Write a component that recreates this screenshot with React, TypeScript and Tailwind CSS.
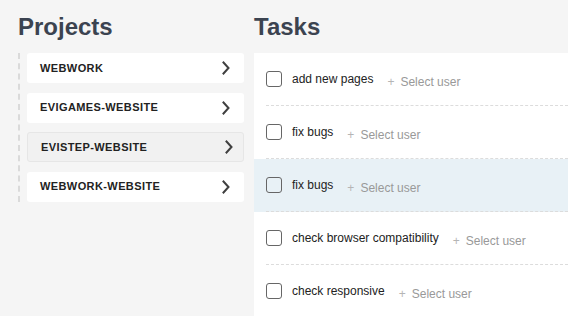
import clsx from "clsx";

const projects = [
  { name: "WEBWORK", active: false },
  { name: "EVIGAMES-WEBSITE", active: false },
  { name: "EVISTEP-WEBSITE", active: true },
  { name: "WEBWORK-WEBSITE", active: false },
];

const tasks = [
  { title: "add new pages", active: false },
  { title: "fix bugs", active: false },
  { title: "fix bugs", active: true },
  { title: "check browser compatibility", active: false },
  { title: "check responsive", active: false },
];

function ChevronIcon() {
  return (
    <svg width="8" height="14" viewBox="0 0 8 14" fill="none" stroke="#3f3f3f" strokeWidth="2" strokeLinecap="square" aria-hidden="true">
      <polyline points="1.5 1.5 6.5 7 1.5 12.5" />
    </svg>
  );
}

function ProjectCard({ name, active }: { name: string; active: boolean }) {
  return (
    <div
      className={clsx(
        "flex h-[30px] items-center justify-between rounded-[3px] pl-[13px] pr-[14px]",
        active ? "border border-[#e6e6e6] bg-[#f1f1f1] pl-[12px]" : "bg-white",
      )}
    >
      <span className="text-[11px] font-bold tracking-[0.4px] text-[#222]">{name}</span>
      <span className={clsx("flex", active && "translate-x-[4px]")}>
        <ChevronIcon />
      </span>
    </div>
  );
}

function TaskRow({ title, active }: { title: string; active: boolean }) {
  return (
    <div className={clsx("pl-[12px]", active && "bg-[#e8f1f6]")}>
      <div className="flex h-[53px] items-center border-b border-dashed border-[#dcdcdc]">
        <span className="mr-[10px] h-[16px] w-[16px] shrink-0 rounded-[3px] border border-[#666]" />
        <span className="text-[12px] leading-[16px] text-[#222]">{title}</span>
        <span className="ml-[14px] mt-[6px] text-[12px] leading-[16px] text-[#b5b5b5]">+</span>
        <span className="ml-[6px] mt-[6px] text-[12px] leading-[16px] text-[#999]">Select user</span>
      </div>
    </div>
  );
}

export default function App() {
  return (
    <div className="flex h-[316px] w-full overflow-hidden bg-[#f5f5f5] font-['Liberation_Sans',Arial,sans-serif]">
      <div className="w-[254px] shrink-0 pl-[18px] pr-[10px] pt-[15px]">
        <h2 className="mb-[14px] text-[24px] font-bold leading-[24px] text-[#3b4350]">Projects</h2>
        <div className="flex flex-col gap-[9.5px] border-l-2 border-dashed border-[#dadada] pl-[7px]">
          {projects.map((p) => (
            <ProjectCard key={p.name} name={p.name} active={p.active} />
          ))}
        </div>
      </div>
      <div className="flex flex-1 flex-col pt-[15px]">
        <h2 className="mb-[14px] text-[24px] font-bold leading-[24px] text-[#3b4350]">Tasks</h2>
        <div className="flex-1 bg-white">
          {tasks.map((t, i) => (
            <TaskRow key={i} title={t.title} active={t.active} />
          ))}
        </div>
      </div>
    </div>
  );
}
